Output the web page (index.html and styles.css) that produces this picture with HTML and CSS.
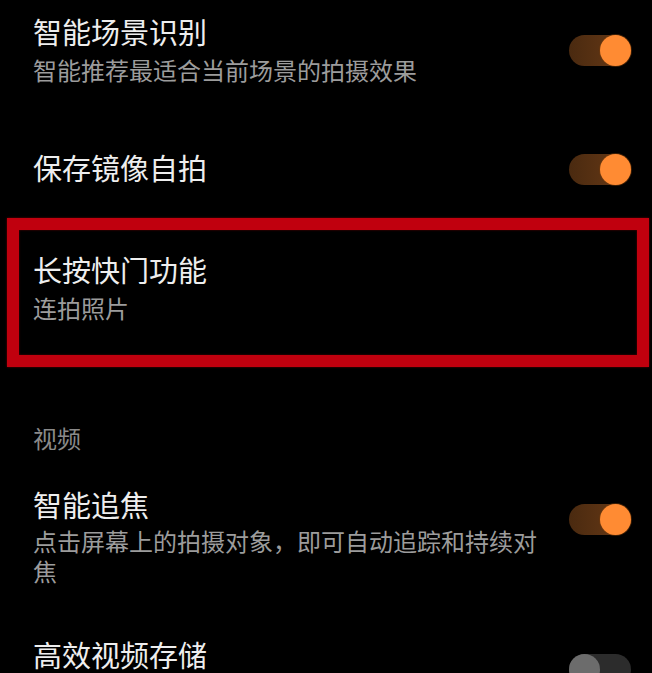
FILE: index.html
```html
<!DOCTYPE html>
<html lang="zh-CN">
<head>
<meta charset="utf-8">
<title>相机设置</title>
<link rel="stylesheet" href="styles.css">
</head>
<body>
<div class="list">
  <div class="row">
    <div class="text">
      <div class="title">智能场景识别</div>
      <div class="summary">智能推荐最适合当前场景的拍摄效果</div>
    </div>
    <div class="toggle on"><span class="knob"></span></div>
  </div>
  <div class="row">
    <div class="text">
      <div class="title">保存镜像自拍</div>
    </div>
    <div class="toggle on"><span class="knob"></span></div>
  </div>
  <div class="row marked">
    <div class="text">
      <div class="title">长按快门功能</div>
      <div class="summary">连拍照片</div>
    </div>
  </div>
  <div class="header">视频</div>
  <div class="row row--top row--tight">
    <div class="text">
      <div class="title">智能追焦</div>
      <div class="summary">点击屏幕上的拍摄对象，即可自动追踪和持续对焦</div>
    </div>
    <div class="toggle on"><span class="knob"></span></div>
  </div>
  <div class="row row--top">
    <div class="text">
      <div class="title">高效视频存储</div>
    </div>
    <div class="toggle off"><span class="knob"></span></div>
  </div>
</div>
</body>
</html>
```

FILE: styles.css
```css
html, body {
  margin: 0;
  padding: 0;
  background: #000;
  height: 100%;
  overflow: hidden;
}
body {
  font-family: "Noto Sans CJK SC", "Noto Sans", sans-serif;
  color: #eeeeee;
}
.list {
  margin-top: -20px;
}
.row {
  display: flex;
  align-items: center;
  justify-content: space-between;
  padding: 31px 21px 31px 33px;
}
.text {
  width: 512px;
}
.title {
  font-size: 29px;
  line-height: 40px;
  color: #eeeeee;
}
.summary {
  margin-top: 4px;
  font-size: 24px;
  line-height: 30px;
  color: #9c9c9c;
}
.row--tight .summary {
  margin-top: 2px;
}
.row--tight {
  padding-bottom: 17px;
}
.row--top {
  align-items: flex-start;
}
.row--top .toggle {
  margin-top: 20px;
}
.toggle {
  position: relative;
  width: 62px;
  height: 31px;
  border-radius: 16px;
  flex: none;
  margin-top: 5px;
}
.toggle.on {
  background: linear-gradient(90deg, #4a2a10, #6a3a16);
}
.toggle.off {
  background: #2c2c2c;
}
.knob {
  position: absolute;
  top: 0;
  width: 31px;
  height: 31px;
  border-radius: 50%;
}
.toggle.on .knob {
  right: 0;
  background: #ff8b33;
  box-shadow: 0 0 0 1px rgba(120, 60, 10, 0.5);
}
.toggle.off .knob {
  left: 0;
  background: #6c6c6c;
}
.marked {
  position: relative;
}
.marked::after {
  content: "";
  position: absolute;
  left: 7px;
  right: 3px;
  top: 0;
  bottom: -13px;
  border: 12px solid #c0000e;
  box-shadow: inset 0 0 2px #600, 0 0 2px #600;
}
.header {
  padding: 69px 33px 0;
  font-size: 24px;
  line-height: 30px;
  color: #8a8a8a;
}
```
